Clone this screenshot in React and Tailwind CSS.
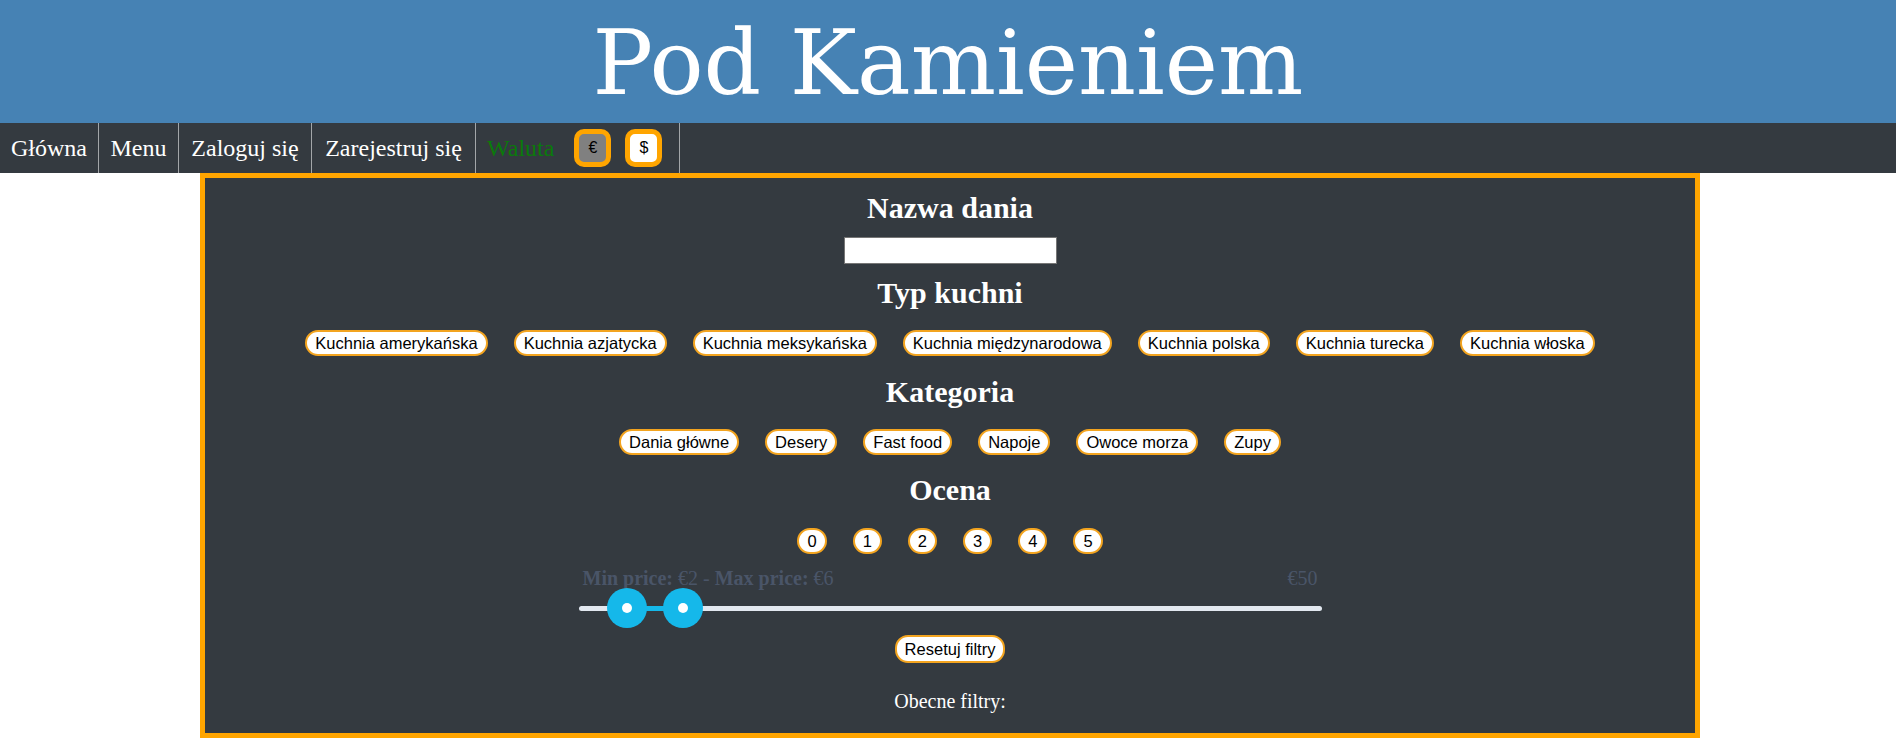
import React from "react";

const serif = "font-['Liberation_Serif','Times_New_Roman',serif]";
const sans = "font-['Liberation_Sans',Arial,sans-serif]";

function Pill({ children, h = "h-[26px]" }) {
  return (
    <button
      className={`${sans} ${h} px-2 border-2 border-[#f3a41f] rounded-[13px] bg-white text-black text-[16.5px] leading-none flex items-center whitespace-nowrap`}
    >
      {children}
    </button>
  );
}

function Heading({ children, mt }) {
  return (
    <h2 className={`${serif} ${mt} text-white font-bold text-[30px] leading-[34px]`}>
      {children}
    </h2>
  );
}

export default function App() {
  const cuisines = [
    "Kuchnia amerykańska",
    "Kuchnia azjatycka",
    "Kuchnia meksykańska",
    "Kuchnia międzynarodowa",
    "Kuchnia polska",
    "Kuchnia turecka",
    "Kuchnia włoska",
  ];
  const categories = ["Dania główne", "Desery", "Fast food", "Napoje", "Owoce morza", "Zupy"];
  const ratings = ["0", "1", "2", "3", "4", "5"];

  const navItems = [
    { label: "Główna", w: "w-[99px]" },
    { label: "Menu", w: "w-[80px]" },
    { label: "Zaloguj się", w: "w-[133px]" },
    { label: "Zarejestruj się", w: "w-[164px]" },
  ];

  const min = 2;
  const max = 6;
  const trackW = 743;
  const thumb = 40;
  const pos = (v) => thumb / 2 + (v / 50) * (trackW - thumb);

  return (
    <div className="w-[1896px] min-h-[755px] bg-white">
      <header className="h-[123px] bg-[#4682b4] flex items-center justify-center">
        <h1 className="font-['DejaVu_Serif',Georgia,serif] text-white text-[90px] leading-none mt-[2px]">
          Pod Kamieniem
        </h1>
      </header>

      <nav className={`${serif} h-[50px] bg-[#343a40] flex items-stretch text-[24px]`}>
        {navItems.map((it) => (
          <a
            key={it.label}
            className={`${it.w} flex items-center justify-center text-white border-r border-[#a3a6a9] whitespace-nowrap`}
          >
            {it.label}
          </a>
        ))}
        <div className="w-[204px] flex items-center border-r border-[#a3a6a9] pl-[11px]">
          <span className="text-[#0a7a0a]">Waluta</span>
          <button
            className={`${sans} ml-[20px] w-[37px] h-[38px] border-[5px] border-[#ffa500] rounded-[10px] bg-[#808080] text-black text-[16px] flex items-center justify-center`}
          >
            €
          </button>
          <button
            className={`${sans} ml-[14px] w-[37px] h-[38px] border-[5px] border-[#ffa500] rounded-[10px] bg-white text-black text-[16px] flex items-center justify-center`}
          >
            $
          </button>
        </div>
      </nav>

      <main className="ml-[200px] w-[1500px] border-[5px] border-[#ffa500] bg-[#343a40] flex flex-col items-center pt-[13px] pb-[20px]">
        <Heading mt="">Nazwa dania</Heading>
        <input
          type="text"
          className="mt-[12px] w-[213px] h-[27px] bg-white border border-[#767676] outline-none"
        />

        <Heading mt="mt-[12px]">Typ kuchni</Heading>
        <div className="mt-[20px] flex gap-[26px]">
          {cuisines.map((c) => (
            <Pill key={c}>{c}</Pill>
          ))}
        </div>

        <Heading mt="mt-[19px]">Kategoria</Heading>
        <div className="mt-[20px] flex gap-[26px]">
          {categories.map((c) => (
            <Pill key={c}>{c}</Pill>
          ))}
        </div>

        <Heading mt="mt-[18px]">Ocena</Heading>
        <div className="mt-[21px] flex gap-[26px]">
          {ratings.map((c) => (
            <Pill key={c}>{c}</Pill>
          ))}
        </div>

        <div className={`${serif} mt-[14px] w-[743px] px-1 flex justify-between text-[20px] leading-[20px] text-[#4a5568]`}>
          <span>
            <b>Min price:</b> €{min} - <b>Max price:</b> €{max}
          </span>
          <span>€50</span>
        </div>

        <div className="relative w-[743px] h-[40px]">
          <div className="absolute left-0 right-0 top-[17.5px] h-[5px] rounded-full bg-[#e2e8f0]" />
          <div
            className="absolute top-[17.5px] h-[5px] bg-[#15b8ea]"
            style={{ left: pos(min), width: pos(max) - pos(min) }}
          />
          {[min, max].map((v) => (
            <div
              key={v}
              className="absolute top-0 w-[40px] h-[40px] rounded-full bg-[#15b8ea] flex items-center justify-center"
              style={{ left: pos(v) - thumb / 2 }}
            >
              <div className="w-[10px] h-[10px] rounded-full bg-white" />
            </div>
          ))}
        </div>

        <div className="mt-[7px]">
          <Pill h="h-[28px]">Resetuj filtry</Pill>
        </div>

        <p className={`${serif} mt-[27px] text-white text-[20px] leading-[23px]`}>Obecne filtry:</p>
      </main>
    </div>
  );
}
